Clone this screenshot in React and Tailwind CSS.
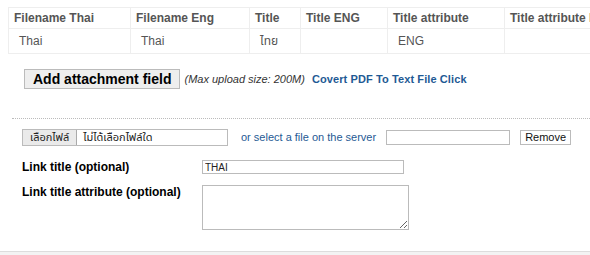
export default function App() {
  const headers = [
    { label: 'Filename Thai', w: 'w-[122px]' },
    { label: 'Filename Eng', w: 'w-[119px]' },
    { label: 'Title', w: 'w-[51px]' },
    { label: 'Title ENG', w: 'w-[87px]' },
    { label: 'Title attribute', w: 'w-[117px]' },
    { label: 'Title attribute ENG', w: 'w-[130px]' },
  ];
  const row = ['Thai', 'Thai', 'ไทย', '', 'ENG', ''];

  return (
    <div className="w-[590px] h-[255px] overflow-hidden bg-white flex flex-col font-['Liberation_Sans','Noto_Sans_Thai','DejaVu_Sans',sans-serif] text-[12px]">
      {/* Files table */}
      <div className="pl-[8px] pt-[7px] overflow-hidden">
        <table className="border-collapse table-fixed w-[626px] text-[#555]">
          <thead>
            <tr className="h-[21px]">
              {headers.map((h) => (
                <th
                  key={h.label}
                  className={`${h.w} border border-[#eee] text-left font-bold pl-[5px] whitespace-nowrap overflow-hidden`}
                >
                  {h.label}
                </th>
              ))}
            </tr>
          </thead>
          <tbody>
            <tr className="h-[25px]">
              {row.map((c, i) => (
                <td key={i} className="border border-[#eee] pl-[10px] whitespace-nowrap">
                  {c}
                </td>
              ))}
            </tr>
          </tbody>
        </table>
      </div>

      {/* Add attachment */}
      <div className="flex items-center pl-[24px] mt-[15px] h-[20px]">
        <button className="h-[20px] px-[8px] bg-[#eee] border border-[#bbb] text-black font-bold text-[14px] leading-none">
          Add attachment field
        </button>
        <span className="ml-[4px] italic text-[11px] text-[#333]">(Max upload size: 200M)</span>
        <a className="ml-[7px] text-[11px] font-bold text-[#1f5a94] tracking-[0.1px]">Covert PDF To Text File Click</a>
      </div>

      <div className="mt-[29px] ml-[12px] border-t border-dotted border-[#bbb]"></div>

      {/* File chooser row */}
      <div className="flex items-center pl-[22px] mt-[10px] h-[17px]">
        <div className="flex items-center w-[206px] h-[17px] border border-[#bbb] text-[11px] text-[#222]">
          <span className="h-full px-[7px] flex items-center bg-[#eaeaea] border-r border-[#aaa]">เลือกไฟล์</span>
          <span className="pl-[6px]">ไม่ได้เลือกไฟล์ใด</span>
        </div>
        <span className="ml-[13px] text-[11px] text-[#1f5a94]">or select a file on the server</span>
        <input className="ml-[10px] w-[124px] h-[15px] border border-[#bbb]" />
        <button className="ml-[10px] w-[51px] h-[15px] border border-[#bbb] bg-white text-[11px] text-[#111] leading-none">
          Remove
        </button>
      </div>

      {/* Link title */}
      <div className="grid grid-cols-[180px_1fr] pl-[22px] mt-[12px] items-center">
        <label className="font-bold text-black">Link title (optional)</label>
        <input
          defaultValue="THAI"
          className="w-[202px] h-[14px] border border-[#bbb] text-[10px] px-[2px] text-[#222]"
        />
      </div>

      <div className="grid grid-cols-[180px_1fr] pl-[22px] mt-[9px] items-start">
        <label className="font-bold text-black leading-[14px]">Link title attribute (optional)</label>
        <textarea className="w-[207px] h-[45px] border border-[#bbb] resize block"></textarea>
      </div>

      <div className="mt-auto h-[4px] border-t border-[#ddd] bg-[#f3f3f3]"></div>
    </div>
  );
}
